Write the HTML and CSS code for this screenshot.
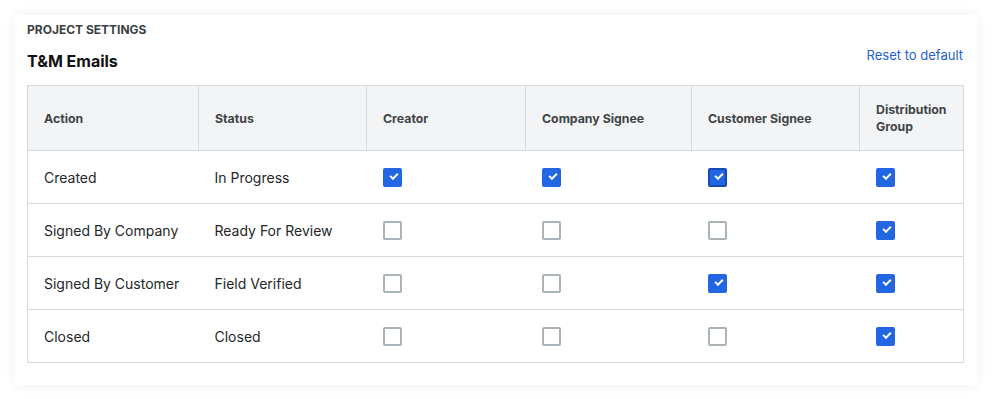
FILE: index.html
```html
<!DOCTYPE html>
<html lang="en">
<head>
    <meta charset="UTF-8">
    <meta name="viewport" content="width=device-width, initial-scale=1.0">
    <title>T&amp;M Emails</title>
    <link rel="stylesheet" href="styles.css">
</head>
<body>

    <!-- 설정 카드 -->
    <div class="settings-card">
        <div class="eyebrow">PROJECT SETTINGS</div>

        <div class="card-head">
            <h2>T&amp;M Emails</h2>
            <a href="#" class="reset-link">Reset to default</a>
        </div>

        <table class="email-table">
            <colgroup>
                <col style="width: 171px">
                <col style="width: 168px">
                <col style="width: 159px">
                <col style="width: 166px">
                <col style="width: 168px">
                <col style="width: 104px">
            </colgroup>
            <thead>
                <tr>
                    <th>Action</th>
                    <th>Status</th>
                    <th>Creator</th>
                    <th>Company Signee</th>
                    <th>Customer Signee</th>
                    <th>Distribution Group</th>
                </tr>
            </thead>
            <tbody>
                <tr>
                    <td>Created</td>
                    <td>In Progress</td>
                    <td><span class="check on"></span></td>
                    <td><span class="check on"></span></td>
                    <td><span class="check on focused"></span></td>
                    <td><span class="check on"></span></td>
                </tr>
                <tr>
                    <td>Signed By Company</td>
                    <td>Ready For Review</td>
                    <td><span class="check"></span></td>
                    <td><span class="check"></span></td>
                    <td><span class="check"></span></td>
                    <td><span class="check on"></span></td>
                </tr>
                <tr>
                    <td>Signed By Customer</td>
                    <td>Field Verified</td>
                    <td><span class="check"></span></td>
                    <td><span class="check"></span></td>
                    <td><span class="check on"></span></td>
                    <td><span class="check on"></span></td>
                </tr>
                <tr>
                    <td>Closed</td>
                    <td>Closed</td>
                    <td><span class="check"></span></td>
                    <td><span class="check"></span></td>
                    <td><span class="check"></span></td>
                    <td><span class="check on"></span></td>
                </tr>
            </tbody>
        </table>
    </div>

</body>
</html>
```

FILE: styles.css
```css
* {
    margin: 0;
    padding: 0;
    box-sizing: border-box;
}

body {
    font-family: Inter, "Noto Sans", sans-serif;
    background-color: #ffffff;
    color: #232729;
    padding: 15px;
}

/* 카드 */
.settings-card {
    background-color: white;
    width: 962px;
    padding: 7px 14px 22px 12px;
    box-shadow: 0 0 12px rgba(30, 40, 60, 0.07);
}

.eyebrow {
    font-size: 12px;
    font-weight: 700;
    color: #3a3f42;
    line-height: 16px;
}

.card-head {
    display: flex;
    justify-content: space-between;
    align-items: flex-start;
    margin-top: 8px;
    margin-bottom: 11px;
}

.card-head h2 {
    font-size: 16px;
    font-weight: 700;
    color: #111;
    line-height: 26px;
    padding-top: 2px;
}

.reset-link {
    font-size: 13px;
    color: #1f5fcf;
    text-decoration: none;
    line-height: 16px;
    margin-top: 1px;
}

/* 테이블 */
.email-table {
    width: 936px;
    border-collapse: collapse;
    table-layout: fixed;
    border: 1px solid #d6d9db;
}

.email-table th {
    background-color: #f3f4f6;
    font-size: 12.3px;
    font-weight: 700;
    color: #3f4447;
    text-align: left;
    height: 65px;
    padding: 0 16px;
    line-height: 17px;
    border: 1px solid #d6d9db;
}

.email-table td {
    font-size: 14px;
    height: 53px;
    padding: 0 16px;
    border-bottom: 1px solid #d6d9db;
    vertical-align: middle;
}

/* 체크박스 */
.check {
    display: block;
    width: 19px;
    height: 19px;
    border: 2px solid #aab3b8;
    border-radius: 2px;
    position: relative;
}

.check.on {
    background-color: #2266e3;
    border-color: #2266e3;
}

.check.on::after {
    content: "";
    position: absolute;
    left: 5px;
    top: 3px;
    width: 6px;
    height: 3px;
    border-left: 2px solid white;
    border-bottom: 2px solid white;
    transform: rotate(-45deg);
}

.check.focused {
    border-color: #174bb0;
}
```
